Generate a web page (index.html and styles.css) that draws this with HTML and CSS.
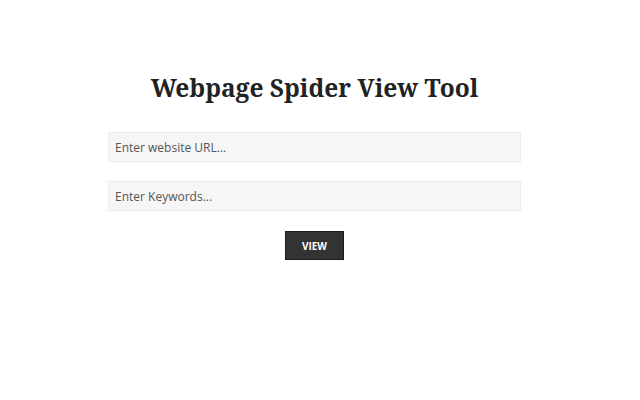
FILE: index.html
```html
<!DOCTYPE html>
<html lang="en">
<head>
<meta charset="utf-8">
<title>Webpage Spider View Tool</title>
<link rel="stylesheet" href="styles.css">
</head>
<body>
<main class="page">
  <h1 class="title">Webpage Spider View Tool</h1>
  <form class="spider-form">
    <input class="field" type="text" placeholder="Enter website URL...">
    <input class="field" type="text" placeholder="Enter Keywords...">
    <button class="view-btn" type="button">VIEW</button>
  </form>
</main>
</body>
</html>
```

FILE: styles.css
```css
html, body {
  margin: 0;
  padding: 0;
  background: #fff;
}

.page {
  box-sizing: border-box;
  width: 100%;
  padding: 0 11px 0 0;
  display: flex;
  flex-direction: column;
  align-items: center;
}

.title {
  margin: 71px 0 0;
  font-family: "Noto Serif", "DejaVu Serif", serif;
  font-weight: 700;
  font-size: 24.5px;
  line-height: 34px;
  color: #222;
}

.spider-form {
  width: 413px;
  margin-top: 27px;
  display: flex;
  flex-direction: column;
  align-items: center;
  gap: 19px;
}

.field {
  box-sizing: border-box;
  width: 100%;
  height: 30px;
  padding: 0 6px;
  border: 1px solid #ececec;
  background: #f6f6f6;
  font-family: "Open Sans", sans-serif;
  font-size: 12px;
  color: #555;
  outline: none;
}

.field::placeholder {
  color: #555;
}

.view-btn {
  box-sizing: border-box;
  width: 59px;
  height: 29px;
  margin-top: 1px;
  border: 1px solid #1c1c1c;
  background: #333;
  color: #fff;
  font-family: "Open Sans", sans-serif;
  font-weight: 700;
  font-size: 10px;
  cursor: pointer;
}
```
